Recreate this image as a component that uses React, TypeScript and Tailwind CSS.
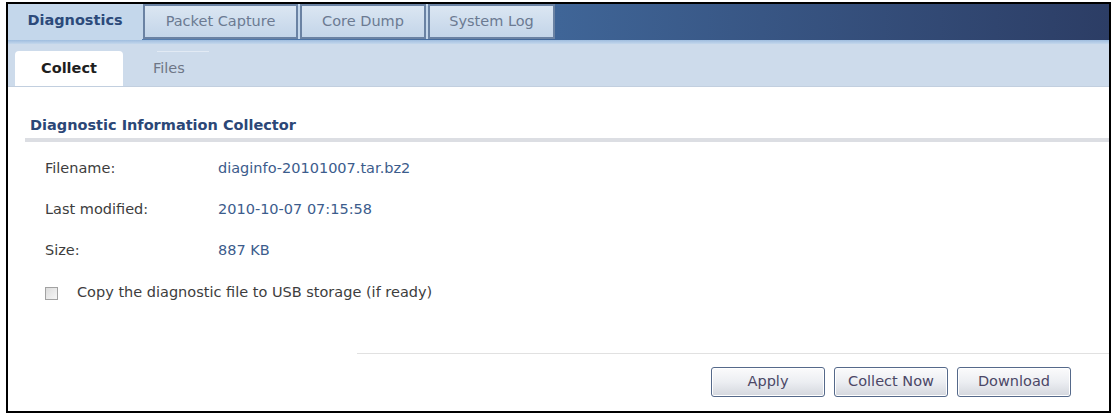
const tabs = [
  { label: "Packet Capture", w: "w-[155px]" },
  { label: "Core Dump", w: "w-[126px]" },
  { label: "System Log", w: "w-[127px]" },
];

const rows = [
  { label: "Filename:", value: "diaginfo-20101007.tar.bz2" },
  { label: "Last modified:", value: "2010-10-07 07:15:58" },
  { label: "Size:", value: "887 KB" },
];

function Button({ children }: { children: React.ReactNode }) {
  return (
    <button
      type="button"
      className="w-[114px] h-[30px] rounded-[3px] border border-[#55698a] bg-gradient-to-b from-[#fbfbfc] via-[#eceef2] to-[#d4d7de] text-[14.5px] text-[#4b4766] shadow-[inset_0_0_0_1px_#ffffff]"
    >
      {children}
    </button>
  );
}

export default function App() {
  return (
    <div className="w-[1112px] h-[417px] bg-white pt-[2px] pl-[6px] pr-[1px] pb-[4px] font-['DejaVu_Sans',sans-serif]">
      <div className="h-full border-2 border-black flex flex-col">
        {/* main tabs */}
        <div className="h-[36px] flex bg-gradient-to-r from-[#5b85b7] via-[#3f6597] to-[#2c3d65]">
          <div className="w-[134px] bg-[#c4d7eb] flex items-center justify-center text-[14.5px] font-bold text-[#2c4a7a] pb-[2px]">
            Diagnostics
          </div>
          <div className="flex gap-[2px] pl-[1px] h-[35px] bg-[#c4d7eb]">
            {tabs.map((t) => (
              <div
                key={t.label}
                className={`${t.w} border-2 border-[#6a82a3] bg-gradient-to-b from-[#dbe6f2] to-[#c3d5e9] flex items-center justify-center text-[14.5px] text-[#6b7a92]`}
              >
                {t.label}
              </div>
            ))}
          </div>
          <div className="flex-1" />
        </div>
        <div className="h-[4px] bg-gradient-to-b from-[#9fbddf] to-[#c4d7ec]" />

        {/* sub tabs */}
        <div className="h-[43px] bg-[#cddbeb] flex items-end pl-[7px] border-b border-[#c2cfdf]">
          <div className="w-[108px] h-[35px] bg-white rounded-t-[4px] flex items-center justify-center text-[14.5px] font-bold text-[#1e1e1e]">
            Collect
          </div>
          <div className="relative ml-[30px] h-[35px] flex items-center text-[14.5px] text-[#6e7686]">
            <div className="absolute top-0 left-[4px] w-[52px] h-px bg-[#e2eaf4]" />
            Files
          </div>
        </div>

        {/* content */}
        <div className="flex-1 flex flex-col">
          <div className="pt-[30px] pl-[22px] text-[14.5px] leading-[17px] font-bold text-[#2b4777]">
            Diagnostic Information Collector
          </div>
          <div className="mt-[4px] ml-[17px] h-[4px] bg-[#dcdee3]" />

          <div className="mt-[6px] pl-[37px] text-[14.5px]">
            {rows.map((r) => (
              <div key={r.label} className="h-[41px] flex items-center">
                <span className="w-[173px] text-[#3d3d3d]">{r.label}</span>
                <span className="text-[#3c5c8c]">{r.value}</span>
              </div>
            ))}
            <div className="mt-[2px] h-[40px] flex items-center gap-[19px]">
              <span className="w-[13px] h-[13px] border border-[#a2a2a2] bg-gradient-to-br from-[#dcdcdc] to-[#f6f6f6]" />
              <span className="text-[#3d3d3d]">Copy the diagnostic file to USB storage (if ready)</span>
            </div>
          </div>

          <div className="mt-[40px] ml-[349px] h-px bg-[#e1e1e1]" />
          <div className="mt-[13px] pr-[38px] flex justify-end gap-[9px]">
            <Button>Apply</Button>
            <Button>Collect Now</Button>
            <Button>Download</Button>
          </div>
        </div>
      </div>
    </div>
  );
}
